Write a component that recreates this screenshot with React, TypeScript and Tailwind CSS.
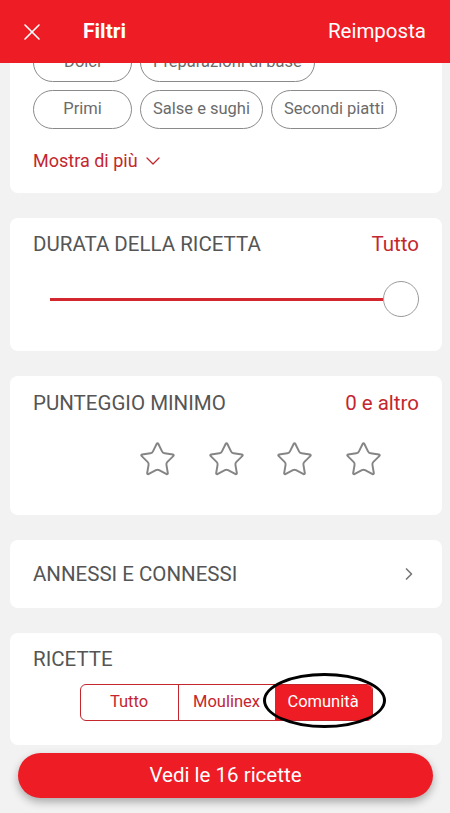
import { X, ChevronDown, ChevronRight, Star } from "lucide-react";

const font = { fontFamily: "Roboto, 'Noto Sans', sans-serif" };

const chipRows = [
    ["Dolci", "Preparazioni di base"],
    ["Primi", "Salse e sughi", "Secondi piatti"],
];

function Card({ className, children }: { className?: string; children: React.ReactNode }) {
    return <div className={`ml-[10px] mr-[8px] rounded-lg bg-white ${className ?? ""}`}>{children}</div>;
}

function CardTitle({ label, value }: { label: string; value?: string }) {
    return (
        <div className="flex items-center justify-between px-[23px] text-[20.5px] leading-6">
            <span className="text-[#555555]">{label}</span>
            {value && <span className="text-[#c4262e]">{value}</span>}
        </div>
    );
}

export default function App() {
    return (
        <div className="relative h-[813px] w-[450px] overflow-hidden bg-[#f2f2f2]" style={font}>
            {/* Header over the scrolled content */}
            <div className="absolute inset-x-0 top-0 z-10 flex h-[63px] items-center bg-[#ee1c25] text-white">
                <X className="ml-[18px] h-[28px] w-[28px]" strokeWidth={1.4} />
                <span className="ml-[37px] text-[21px] font-bold">Filtri</span>
                <span className="ml-auto mr-[24px] text-[20.5px]">Reimposta</span>
            </div>

            <div className="flex flex-col gap-[25px] pt-[10px]">
                <Card className="pt-[33px] pb-[20px]">
                    <div className="flex flex-col gap-[8px] px-[23px]">
                        {chipRows.map((row, i) => (
                            <div key={i} className="flex gap-[8px]">
                                {row.map((c) => (
                                    <span
                                        key={c}
                                        className="flex h-[39px] min-w-[99px] items-center justify-center rounded-full border border-[#8a8a8a] px-[12px] text-[16.5px] text-[#6b6b6b]"
                                    >
                                        {c}
                                    </span>
                                ))}
                            </div>
                        ))}
                    </div>
                    <div className="mt-[20px] flex items-center gap-[3px] px-[23px] text-[18px] leading-6 text-[#c4262e]">
                        Mostra di più
                        <ChevronDown className="h-[24px] w-[24px]" strokeWidth={1.3} />
                    </div>
                </Card>

                <Card className="pt-[14px] pb-[34px]">
                    <CardTitle label="DURATA DELLA RICETTA" value="Tutto" />
                    <div className="mt-[25px] flex items-center pl-[40px] pr-[23px]">
                        <div className="h-[3px] flex-1 bg-[#d3262e]" />
                        <div className="h-[36px] w-[36px] rounded-full border border-[#9a9a9a] bg-white" />
                    </div>
                </Card>

                <Card className="pt-[15px] pb-[36px]">
                    <CardTitle label="PUNTEGGIO MINIMO" value="0 e altro" />
                    <div className="mt-[25px] flex justify-center gap-[29.5px]">
                        {[0, 1, 2, 3, 4].map((i) => (
                            <Star
                                key={i}
                                className={`h-[39px] w-[39px] text-[#858585] ${i === 0 ? "invisible" : ""}`}
                                strokeWidth={1.2}
                            />
                        ))}
                    </div>
                </Card>

                <Card className="flex h-[68px] items-center justify-between px-[23px]">
                    <span className="text-[20.5px] text-[#555555]">ANNESSI E CONNESSI</span>
                    <ChevronRight className="h-[20px] w-[20px] text-[#777777]" strokeWidth={2} />
                </Card>

                <Card className="pt-[14px] pb-[24px]">
                    <CardTitle label="RICETTE" />
                    <div className="relative mt-[13px] flex justify-center">
                        <div className="flex h-[37px] overflow-hidden rounded-[6px] border border-[#c4262e] text-[16.5px]">
                            <span className="flex w-[97px] items-center justify-center text-[#c4262e]">Tutto</span>
                            <span className="flex w-[97px] items-center justify-center border-l border-[#c4262e] text-[#c4262e]">
                                Moulinex
                            </span>
                            <span className="flex w-[97px] items-center justify-center bg-[#ee1c25] text-white">Comunità</span>
                        </div>
                        {/* annotation ring */}
                        <div className="absolute left-[253px] top-[-11px] h-[55px] w-[123px] rounded-[50%] border-[3px] border-black" />
                    </div>
                </Card>
            </div>

            <div className="absolute left-[18px] right-[17px] top-[753px] z-10 flex h-[45px] items-center justify-center rounded-full bg-[#ee1c25] text-[20.5px] text-white shadow-[0_4px_8px_rgba(0,0,0,0.3)]">
                Vedi le 16 ricette
            </div>
        </div>
    );
}
